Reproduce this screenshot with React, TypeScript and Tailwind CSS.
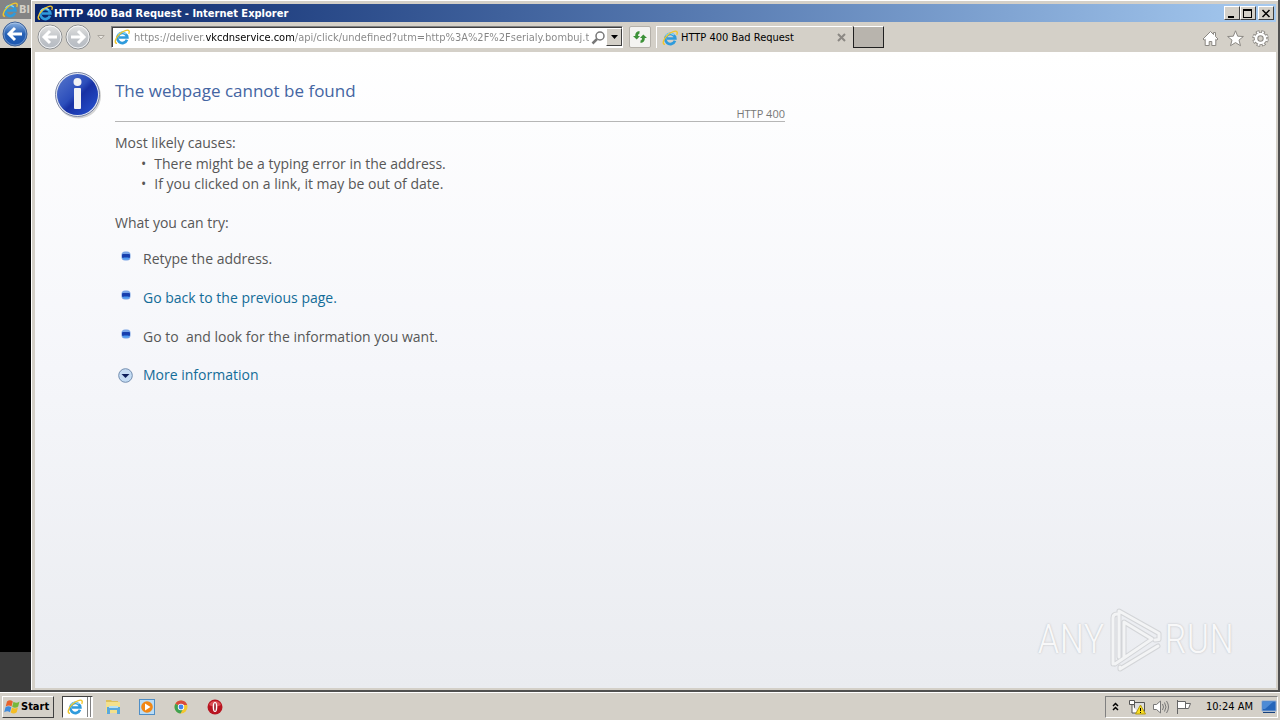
import type { ReactNode } from "react";

const ui = "font-['DejaVu_Sans_Condensed','DejaVu_Sans',sans-serif] text-[11px] leading-4";
const raised = "border border-t-white border-l-white border-r-[#404040] border-b-[#404040] bg-[#d4d0c8]";
const link = "text-[#136c98]";

const IeLogo = ({ className }: { className?: string }) => (
  <svg viewBox="0 0 16 16" className={className} aria-hidden="true">
    <path
      d="M13 10.8a5 5 0 1 1 .3-2.300H5"
      fill="none"
      stroke="#2f9bdc"
      strokeWidth="2.7"
    />
    <path d="M3.600 6a5 5 0 0 1 8.200-1" fill="none" stroke="#8ad6f7" strokeWidth="1.2" />
    <path
      d="M3 14.300C0 14.600 1 9.300 5.400 5.200 9.400 1.500 13.900.3 15 1.900c.5.900.2 1.900-.3 3"
      fill="none"
      stroke="#f0c62c"
      strokeWidth="1.4"
    />
  </svg>
);

const Arrow = ({ blue, flip }: { blue?: boolean; flip?: boolean }) => (
  <svg viewBox="0 0 26 26" className="size-[26px]" aria-hidden="true">
    <defs>
      <linearGradient id="navBlue" x1="0" y1="0" x2="0" y2="1">
        <stop offset="0" stopColor="#8fb4e2" />
        <stop offset="0.5" stopColor="#2560b4" />
        <stop offset="1" stopColor="#1b56b0" />
      </linearGradient>
      <linearGradient id="navGray" x1="0" y1="0" x2="0" y2="1">
        <stop offset="0" stopColor="#e4e4e3" />
        <stop offset="0.5" stopColor="#c3c6ca" />
        <stop offset="1" stopColor="#b4bac2" />
      </linearGradient>
    </defs>
    <circle cx="13" cy="13" r="12" fill={blue ? "url(#navBlue)" : "url(#navGray)"} stroke={blue ? "#3c5f94" : "#8f9193"} />
    <circle cx="13" cy="13" r="11" fill="none" stroke="#fff" strokeOpacity={blue ? 0.3 : 0.8} />
    <path
      d="M20 13H7.500M13 7l-6 6 6 6"
      fill="none"
      stroke="#fff"
      strokeWidth="3"
      transform={flip ? "rotate(180 13 13)" : undefined}
    />
  </svg>
);

const WindowButton = ({ label, children }: { label: string; children: ReactNode }) => (
  <button aria-label={label} className={`flex h-3.5 w-4 items-center justify-center ${raised}`}>
    <svg viewBox="0 0 10 9" className="h-[9px] w-2.5 shrink-0" fill="none" stroke="#000" shapeRendering="crispEdges">
      {children}
    </svg>
  </button>
);

const TitleBar = () => (
  <header className="flex h-[18px] items-center bg-linear-to-r from-[#0a246a] to-[#a6caf0] px-[2px]">
    <IeLogo className="size-4" />
    <h1 className={`${ui} flex-1 pt-px pl-px font-bold text-white`}>HTTP 400 Bad Request - Internet Explorer</h1>
    <div className="flex">
      <WindowButton label="Minimize">
        <path d="M1 8h6" strokeWidth="2" />
      </WindowButton>
      <WindowButton label="Maximize">
        <path d="M.5 0v8.500h8V0" />
        <path d="M0 1h9" strokeWidth="2" />
      </WindowButton>
      <span className="w-[2px]" />
      <WindowButton label="Close">
        <path d="M1.500 1l7 7M8.500 1l-7 7" strokeWidth="1.500" shapeRendering="auto" />
      </WindowButton>
    </div>
  </header>
);

const ToolBar = () => (
  <nav className="flex h-[30px] items-center bg-[#d4d0c8] pl-[2px]">
    <button aria-label="Back">
      <Arrow />
    </button>
    <button aria-label="Forward" className="ml-[2px]">
      <Arrow flip />
    </button>
    <button aria-label="Recent pages" className="ml-1.5 w-2">
      <svg viewBox="0 0 8 5" className="w-2" fill="#ece9e4" stroke="#aaa69f">
        <path d="M.8.5h6.400L4 4z" />
      </svg>
    </button>
    <div className="ml-1.5 flex h-[22px] w-[512px] items-center border border-t-[#808080] border-r-white border-b-white border-l-[#808080] bg-white pl-[2px] shadow-[inset_1px_1px_#404040]">
      <IeLogo className="size-4" />
      <input
        aria-label="Address"
        defaultValue="https://deliver.vkcdnservice.com/api/click/undefined?utm=http%3A%2F%2Fserialy.bombuj.tv"
        className={`${ui} ml-1 min-w-0 flex-1 bg-[linear-gradient(90deg,#858585_72px,#000_72px,#000_160px,#858585_160px)] bg-clip-text pt-px text-transparent outline-none`}
      />
      <button aria-label="Search" className="ml-[2px]">
        <svg viewBox="0 0 15 15" className="size-[15px]" fill="none" stroke="#777">
          <circle cx="9" cy="6" r="4" strokeWidth="1.500" />
          <path d="M6 9l-4.500 4.500" strokeWidth="2.500" />
        </svg>
      </button>
      <button aria-label="Show address list" className={`flex h-[18px] w-4 items-center justify-center ${raised}`}>
        <svg viewBox="0 0 7 4" className="w-[7px]">
          <path d="M0 0h7L3.500 4z" />
        </svg>
      </button>
    </div>
    <button
      aria-label="Refresh"
      className="ml-1.5 flex size-[22px] items-center justify-center rounded-[2px] border border-[#b4b0a9] bg-[#f4f3f1]"
    >
      <svg viewBox="0 0 16 14" className="h-3.5 w-4" fill="#3d9138" aria-hidden="true">
        <path d="M7.500 1v2.500Q6 3.500 6 6h2L4.700 9.500 1 6h2.200Q3 1.300 7.500 1z" />
        <path d="M8.500 13v-2.500Q10 10.500 10 8H8l3.300-3.500L15 8h-2.200q.2 4.700-4.300 5z" />
      </svg>
    </button>
    <div className="ml-[5px] flex h-[22px] w-[196px] items-center border-t border-l border-white pl-[5px]">
      <IeLogo className="size-4" />
      <span className={`${ui} ml-[3px] flex-1 pt-px`}>HTTP 400 Bad Request</span>
      <button aria-label="Close tab" className="mr-1.5">
        <svg viewBox="0 0 9 9" className="size-[9px]" stroke="#8b8883" strokeWidth="2">
          <path d="M1 1l7 7M8 1L1 8" />
        </svg>
      </button>
    </div>
    <button
      aria-label="New tab"
      className="ml-px h-[22px] w-[31px] border border-t-white border-r-[#202020] border-b-[#202020] border-l-[#202020] bg-[#b8b4ad]"
    />
    <div className="ml-auto flex gap-2 pt-[2px] pr-[7px]">
      <button aria-label="Home">
        <svg viewBox="0 0 17 17" className="size-[17px]" fill="#fff" stroke="#8b8883">
          <path d="M8.500 1.500L1 9l1.200 1.200 1-.9V15.500h4v-4h2.600v4h4V9.300l1 .9L16 9l-2.500-2.500V2.500h-2v2z" />
        </svg>
      </button>
      <button aria-label="Favorites">
        <svg viewBox="0 0 17 17" className="size-[17px]" fill="#fff" stroke="#8b8883">
          <path d="M8.500.8l2.200 5.400 5.700.3-4.400 3.600 1.500 5.600-5-3.100-5 3.100 1.500-5.600L.6 6.500l5.700-.3z" />
        </svg>
      </button>
      <button aria-label="Tools">
        <svg viewBox="0 0 17 17" className="size-[17px]" fill="none">
          <circle cx="8.500" cy="8.500" r="6.500" stroke="#8b8883" strokeWidth="3.400" strokeDasharray="3.400 1.705" />
          <circle cx="8.500" cy="8.500" r="4.400" stroke="#8b8883" strokeWidth="4.400" />
          <circle cx="8.500" cy="8.500" r="6.500" stroke="#fff" strokeWidth="2" strokeDasharray="1.800 3.305" strokeDashoffset="-.8" />
          <circle cx="8.500" cy="8.500" r="4.500" stroke="#fff" strokeWidth="2.600" />
        </svg>
      </button>
    </div>
  </nav>
);

const InfoIcon = () => (
  <svg viewBox="0 0 48 48" className="size-12" aria-hidden="true">
    <defs>
      <linearGradient id="info" x1="0" y1="0" x2="1" y2="1">
        <stop offset="0" stopColor="#5878cc" />
        <stop offset="0.45" stopColor="#2c4ebb" />
        <stop offset="0.55" stopColor="#1831a4" />
        <stop offset="1" stopColor="#2855d4" />
      </linearGradient>
    </defs>
    <circle cx="24.500" cy="25" r="22.500" fill="#aaa" opacity=".5" />
    <circle cx="23.500" cy="23.500" r="22" fill="#e4e8f3" stroke="#7883a3" />
    <circle cx="23.500" cy="23.500" r="20.500" fill="url(#info)" />
    <circle cx="23.500" cy="11" r="4" fill="#f2f2f5" />
    <rect x="20" y="17" width="7" height="21" rx="1" fill="#f2f2f5" />
  </svg>
);

const Bullet = () => (
  <svg viewBox="0 0 10 10" className="mt-[2px] size-2.5" aria-hidden="true">
    <rect x=".5" y=".5" width="9" height="9" rx="3.500" fill="#78a4e6" />
    <rect x="1" y="3" width="8" height="4" rx="1" fill="#173fae" />
    <rect x="2" y="6.500" width="6" height="2" rx="1" fill="#4d9af0" />
  </svg>
);

const Row = ({ children }: { children: ReactNode }) => (
  <li className="flex gap-3">
    <Bullet />
    <span>{children}</span>
  </li>
);

const ErrorPage = () => (
  <main className="flex-1 bg-linear-to-b from-white via-[#f5f6fa] to-[#eaecf0] font-['Open_Sans','Noto_Sans',sans-serif] text-[14px] leading-5 text-[#575757]">
    <div className="flex gap-[13px] pt-[19px] pl-[19px]">
      <InfoIcon />
      <div className="w-[670px]">
        <div className="border-b border-[#b6b6b6]">
          <h2 className="pt-1.5 text-[17px] leading-7 text-[#4465a2]">The webpage cannot be found</h2>
          <p className="pt-[2px] text-right text-[11px] leading-3.5 text-[#787878]">HTTP 400</p>
        </div>
        <p className="mt-[11px]">Most likely causes:</p>
        <ul className="mt-px list-none pl-[26px]">
          <li className="flex gap-2">
            <span>•</span>There might be a typing error in the address.
          </li>
          <li className="flex gap-2">
            <span>•</span>If you clicked on a link, it may be out of date.
          </li>
        </ul>
        <p className="mt-[19px]">What you can try:</p>
        <ul className="mt-4 flex flex-col gap-[19px] pl-1.5">
          <Row>Retype the address.</Row>
          <Row>
            <a href="#back" className={link}>Go back to the previous page.</a>
          </Row>
          <Row>Go to &nbsp;and look for the information you want.</Row>
        </ul>
        <button className={`mt-[18px] ml-[3px] flex items-center gap-2.5 ${link}`}>
          <svg viewBox="0 0 15 15" className="size-[15px]" aria-hidden="true">
            <circle cx="7.500" cy="7.500" r="6.800" fill="#c4dcf4" stroke="#738daf" />
            <path d="M3.500 6h8l-4 4z" fill="#0c1f5c" />
          </svg>
          More information
        </button>
      </div>
    </div>
  </main>
);

const Watermark = () => (
  <div className="absolute right-11 bottom-4 flex items-center font-['Roboto_Condensed','Liberation_Sans_Narrow','Open_Sans_Condensed',sans-serif] text-[40px] leading-[68px] font-light text-[#f8f8f9] [text-shadow:0_0_2px_#b8babd]">
    <span>ANY</span>
    <svg viewBox="0 0 60 66" className="h-[66px] w-[60px]" fill="none" aria-hidden="true">
      <g stroke="#d3d5d8" strokeWidth="5" strokeLinejoin="round" strokeLinecap="round">
        <path d="M8 57V11q0-4 4-4M14 50V4l40 22.500v6L50 33M19 50V15l28 17L10 57M15 60v2l38-23" />
      </g>
      <g stroke="#f3f4f5" strokeWidth="3" strokeLinejoin="round" strokeLinecap="round">
        <path d="M8 57V11q0-4 4-4M14 50V4l40 22.500v6L50 33M19 50V15l28 17L10 57M15 60v2l38-23" />
      </g>
    </svg>
    <span>RUN</span>
  </div>
);

const BackWindow = () => (
  <aside className="flex w-[31px] shrink-0 flex-col overflow-hidden bg-black">
    <div className="flex h-[19px] items-center bg-[#848484] pl-[2px]">
      <IeLogo className="size-4 shrink-0" />
      <span className={`${ui} pl-px font-bold text-[#d4d0c8]`}>Bl</span>
    </div>
    <div className="flex h-[29px] items-center bg-[#d4d0c8] pl-[2px]">
      <button aria-label="Back in other window" className="shrink-0">
        <Arrow blue />
      </button>
    </div>
    <div className="mt-auto h-10 bg-[#3b3b3b]" />
  </aside>
);

const TaskBar = () => (
  <footer className="flex h-7 items-center border-t border-white bg-[#d4d0c8] px-[2px]">
    <button className={`${ui} flex h-[22px] w-[52px] items-center gap-px pl-px font-bold ${raised}`}>
      <svg viewBox="0 0 16 16" className="size-4 shrink-0" aria-hidden="true">
        <path d="M3 2.500q3-2.500 5.800 0L7.500 7.500q-2.500-2-5.800 0z" fill="#e8622c" />
        <path d="M9.500 2.800q3 2 6-.3L14.200 7.500q-3 2.200-6 .3z" fill="#77b83b" />
        <path d="M1.500 8.300q3-2.200 5.800 0L6 13.300q-2.500-2-5.800 0z" fill="#3f8bdc" />
        <path d="M8 8.600q3 2 6-.3l-1.300 5q-3 2.200-6 .3z" fill="#f4bd24" />
      </svg>
      Start
    </button>
    <div className="ml-2 flex items-center gap-[18px]">
      <button
        aria-label="Internet Explorer"
        className="flex h-[22px] w-[31px] items-center border border-t-[#404040] border-r-white border-b-white border-l-[#404040] bg-white"
      >
        <IeLogo className="ml-1 size-4" />
        <span className="ml-1 h-full w-1 border-x border-[#808080] bg-white" />
      </button>
      <button aria-label="Explorer" className="-ml-1.5">
        <svg viewBox="0 0 16 16" className="size-4">
          <path d="M1 1h5l1 1h6v4H1z" fill="#dcc05c" />
          <path d="M1 3h14v11H1z" fill="#f3e08c" />
          <path d="M2 15V8h13v7h-3v-4H5v4z" fill="#5aa9dc" />
          <path d="M4 7h9v2H4z" fill="#b4e1f5" />
        </svg>
      </button>
      <button aria-label="Media Player">
        <svg viewBox="0 0 16 16" className="size-4">
          <rect x=".5" y=".5" width="15" height="15" fill="#b9dcf6" stroke="#4f8ec6" />
          <circle cx="8" cy="8" r="5.800" fill="#f18715" />
          <path d="M6 4.500l5.500 3.500L6 11.500z" fill="#fff" />
        </svg>
      </button>
      <button aria-label="Chrome">
        <svg viewBox="0 0 16 16" className="size-4">
          <circle cx="8" cy="8" r="6.500" fill="#f4c72f" />
          <path d="M8 8L2.400 4.700A6.500 6.500 0 0 1 14.200 6H8z" fill="#d94a3d" />
          <path d="M8 8L2.400 4.700A6.500 6.500 0 0 0 7.500 14.500L10 10z" fill="#3fa153" />
          <circle cx="8" cy="8" r="3.200" fill="#fff" />
          <circle cx="8" cy="8" r="2.400" fill="#4384ed" />
        </svg>
      </button>
      <button aria-label="Opera">
        <svg viewBox="0 0 16 16" className="size-4">
          <circle cx="8" cy="8" r="7.500" fill="#b81420" />
          <path d="M2 6a6.500 6.500 0 0 1 12 0q-6 3-12 0z" fill="#dc5055" />
          <ellipse cx="8" cy="8" rx="2.300" ry="5" fill="#fff" />
          <ellipse cx="8" cy="8" rx=".8" ry="4" fill="#8d0d18" />
        </svg>
      </button>
    </div>
    <div className="ml-auto flex h-[22px] items-center border border-t-[#808080] border-r-white border-b-white border-l-[#808080] pl-1.5">
      <button aria-label="Show hidden icons">
        <svg viewBox="0 0 7 9" className="h-[9px] w-[7px]" fill="none" stroke="#000" strokeWidth="1.500">
          <path d="M1 4l2.500-2.500L6 4M1 8l2.500-2.500L6 8" />
        </svg>
      </button>
      <svg viewBox="0 0 17 16" className="ml-2.5 h-4 w-[17px]" aria-hidden="true">
        <path d="M5.500 3.500h10v9h-10z" fill="#ddd" stroke="#555" />
        <path d="M.5 1.500h5v4h-5zM3 5.500V14h6" fill="#fff" stroke="#555" />
        <path d="M11.500 6L16.500 15h-10z" fill="#f8dc20" stroke="#b39b16" />
        <path d="M11.500 9v3M11.500 13v1" stroke="#000" />
      </svg>
      <svg viewBox="0 0 17 16" className="ml-1.5 h-4 w-[17px]" fill="#fff" stroke="#777" aria-hidden="true">
        <path d="M1.500 5.500h3L8.500 2v12l-4-3.500h-3z" />
        <path d="M10.500 5q2 3 0 6M12.500 3.500q3 4.500 0 9M14.500 2q4 6 0 12" fill="none" />
      </svg>
      <svg viewBox="0 0 17 16" className="ml-1.5 h-4 w-[17px]" fill="#fff" stroke="#666" aria-hidden="true">
        <path d="M2.500 1v14M2.500 2.500h8v7h-8M10.500 4.500h5l-2 5h-4" />
      </svg>
      <time className={`${ui} ml-3.5 pt-px`}>10:24 AM</time>
      <button aria-label="Show desktop" className="ml-2">
        <svg viewBox="0 0 16 14" className="h-3.5 w-4">
          <path d="M1 1h14v10H1z" fill="#2465ba" stroke="#8cabd4" />
          <path d="M1.500 1.500h11L4 9H1.500z" fill="#4d8bd6" />
          <path d="M2 12.500h12" stroke="#16417d" />
        </svg>
      </button>
    </div>
  </footer>
);

export default function App() {
  return (
    <div className="flex min-h-screen flex-col bg-[#d4d0c8] text-black">
      <div className="flex flex-1">
        <BackWindow />
        <div className="relative flex min-w-0 flex-1 flex-col border-r-2 border-b-2 border-r-[#505050] border-b-[#505050] bg-[#d4d0c8] pt-1 pr-[2px] pb-[2px] pl-1 shadow-[inset_1px_1px_#fff]">
          <TitleBar />
          <ToolBar />
          <ErrorPage />
          <Watermark />
        </div>
      </div>
      <TaskBar />
    </div>
  );
}
